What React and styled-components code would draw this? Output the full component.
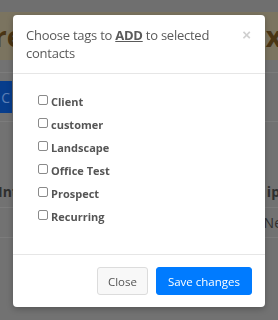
import React from 'react'
import styled, { createGlobalStyle } from 'styled-components'

const GlobalStyle = createGlobalStyle`
  html, body {
    margin: 0;
    padding: 0;
    width: 278px;
    height: 320px;
    overflow: hidden;
    background: #727272;
    font-family: 'Open Sans', 'Liberation Sans', sans-serif;
  }
`

const Page = styled.div`
  width: 278px;
  height: 320px;
  display: flex;
  flex-direction: column;
  background: #727272;
`

const TopStrip = styled.div`
  height: 12px;
  background: #6f6f6f;
`

const Banner = styled.div`
  height: 48px;
  background: #7b7460;
  display: flex;
  align-items: center;
  justify-content: space-between;
  font-size: 28px;
  font-weight: 700;
  color: #4a3514;
  overflow: hidden;
`

const BannerText = styled.span`
  margin-left: ${(p) => p.ml || 0}px;
  margin-right: ${(p) => p.mr || 0}px;
`

const Row = styled.div`
  height: ${(p) => p.h}px;
  border-bottom: 1px solid #7c7c7c;
  display: flex;
  align-items: ${(p) => p.align || 'center'};
  justify-content: space-between;
  padding-bottom: ${(p) => p.pb || 0}px;
  box-sizing: border-box;
  font-size: 14px;
  font-weight: ${(p) => (p.bold ? 700 : 400)};
  color: #2f2f2f;
  overflow: hidden;
`

const Edge = styled.span`
  margin-left: ${(p) => p.ml || 0}px;
  margin-right: ${(p) => p.mr || 0}px;
`

const PageButton = styled.div`
  width: 40px;
  height: 32px;
  margin-left: -28px;
  background: #073d8c;
  color: #5c7fb5;
  font-size: 14px;
  display: flex;
  align-items: center;
  justify-content: flex-end;
  padding-right: 2px;
  box-sizing: border-box;
`

const Modal = styled.div`
  position: fixed;
  top: 15px;
  left: 13px;
  width: 252px;
  background: #fff;
  border-radius: 4px;
  box-shadow: 0 2px 6px rgba(0, 0, 0, 0.25);
  display: flex;
  flex-direction: column;
`

const Header = styled.div`
  display: flex;
  align-items: flex-start;
  justify-content: space-between;
  padding: 11px 13px;
  border-bottom: 1px solid #e6e6e6;
`

const Title = styled.div`
  font-size: 13px;
  letter-spacing: -0.25px;
  line-height: 18px;
  color: #5a5a5a;
  width: 205px;

  u {
    font-weight: 700;
  }
`

const CloseX = styled.span`
  font-family: 'Liberation Sans', sans-serif;
  font-size: 15px;
  font-weight: 700;
  line-height: 18px;
  color: #d0d0d0;
  margin-right: 1px;
`

const Body = styled.div`
  padding: 16px 13px 26px 25px;
  display: flex;
  flex-direction: column;
`

const TagLabel = styled.label`
  height: 23px;
  display: flex;
  align-items: center;
  gap: 3px;
  font-size: 11px;
  font-weight: 700;
  color: #555;
`

const Box = styled.span`
  width: 10px;
  height: 10px;
  border: 1px solid #8a8a8a;
  border-radius: 2px;
  box-sizing: border-box;
  margin-top: -3px;
`

const Footer = styled.div`
  border-top: 1px solid #e6e6e6;
  padding: 12px 13px;
  display: flex;
  justify-content: flex-end;
  gap: 8px;
`

const Button = styled.button`
  height: 28px;
  padding: 0 ${(p) => (p.primary ? 11 : 10)}px;
  border-radius: 3px;
  border: 1px solid ${(p) => (p.primary ? '#007bff' : '#dcdcdc')};
  background: ${(p) => (p.primary ? '#007bff' : '#f8f8f8')};
  color: ${(p) => (p.primary ? '#fff' : '#555')};
  font-family: 'Open Sans', 'Liberation Sans', sans-serif;
  font-size: 11.5px;
`

const tags = ['Client', 'customer', 'Landscape', 'Office Test', 'Prospect', 'Recurring']

const App = () => {
  return (
    <>
      <GlobalStyle />
      <Page>
        <TopStrip />
        <Banner>
          <BannerText ml={-6}>re</BannerText>
          <BannerText mr={-4}>x</BannerText>
        </Banner>
        <Row h={13} />
        <Row h={49}>
          <PageButton>C</PageButton>
        </Row>
        <Row h={86} bold align="flex-end" pb={6}>
          <Edge ml={-2}>Int</Edge>
          <Edge mr={-2}>ip</Edge>
        </Row>
        <Row h={30}>
          <span />
          <Edge mr={-4}>Ne</Edge>
        </Row>
      </Page>
      <Modal>
        <Header>
          <Title>
            Choose tags to <u>ADD</u> to selected contacts
          </Title>
          <CloseX>×</CloseX>
        </Header>
        <Body>
          {tags.map((tag) => (
            <TagLabel key={tag}>
              <Box />
              {tag}
            </TagLabel>
          ))}
        </Body>
        <Footer>
          <Button>Close</Button>
          <Button primary>Save changes</Button>
        </Footer>
      </Modal>
    </>
  )
}

export default App
